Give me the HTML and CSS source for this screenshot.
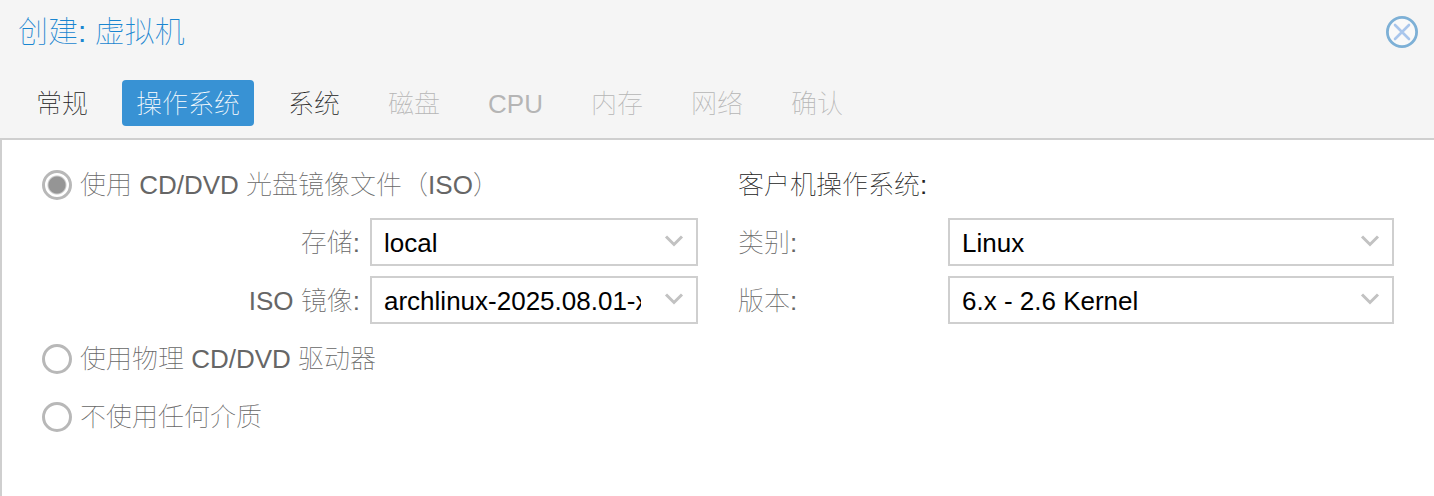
FILE: index.html
```html
<!DOCTYPE html>
<html lang="zh-CN">
  <head>
    <meta charset="UTF-8" />
    <meta name="viewport" content="width=device-width, initial-scale=1.0" />
    <title>创建: 虚拟机</title>
    <link rel="stylesheet" href="styles.css">
  </head>

  <body>
    <header class="window-header">
      <h1>创建: 虚拟机</h1>
      <button type="button" class="close-btn" aria-label="关闭">
        <svg width="32" height="32" viewBox="0 0 32 32" fill="none">
          <circle cx="16" cy="16" r="14.6" fill="#f9f9f9" stroke="#7db0d6" stroke-width="2.8" />
          <path d="M9 9L23 23M23 9L9 23" stroke="#a9c6ec" stroke-width="2.6" stroke-linecap="round" />
        </svg>
      </button>
    </header>

    <nav class="tabs">
      <button type="button" class="tab">常规</button>
      <button type="button" class="tab active">操作系统</button>
      <button type="button" class="tab">系统</button>
      <button type="button" class="tab" disabled>磁盘</button>
      <button type="button" class="tab" disabled>CPU</button>
      <button type="button" class="tab" disabled>内存</button>
      <button type="button" class="tab" disabled>网络</button>
      <button type="button" class="tab" disabled>确认</button>
    </nav>

    <form class="panel">
      <div class="column">
        <div class="row">
          <input type="radio" name="media" id="media-iso" checked />
          <label for="media-iso">使用 CD/DVD 光盘镜像文件（ISO）</label>
        </div>
        <div class="field media-field">
          <label for="storage">存储:</label>
          <div class="combo">
            <select id="storage">
              <option>local</option>
            </select>
            <svg class="arrow" width="20" height="14" viewBox="0 0 20 14"><path d="M2 2.5L10 10.5L18 2.5" /></svg>
          </div>
        </div>
        <div class="field media-field">
          <label for="iso">ISO 镜像:</label>
          <div class="combo">
            <select id="iso">
              <option>archlinux-2025.08.01-x86_64.iso</option>
            </select>
            <svg class="arrow" width="20" height="14" viewBox="0 0 20 14"><path d="M2 2.5L10 10.5L18 2.5" /></svg>
          </div>
        </div>
        <div class="row">
          <input type="radio" name="media" id="media-cdrom" />
          <label for="media-cdrom">使用物理 CD/DVD 驱动器</label>
        </div>
        <div class="row">
          <input type="radio" name="media" id="media-none" />
          <label for="media-none">不使用任何介质</label>
        </div>
      </div>

      <div class="column">
        <div class="row guest-title">客户机操作系统:</div>
        <div class="field guest-field">
          <label for="os-type">类别:</label>
          <div class="combo">
            <select id="os-type">
              <option>Linux</option>
            </select>
            <svg class="arrow" width="20" height="14" viewBox="0 0 20 14"><path d="M2 2.5L10 10.5L18 2.5" /></svg>
          </div>
        </div>
        <div class="field guest-field">
          <label for="os-version">版本:</label>
          <div class="combo">
            <select id="os-version">
              <option>6.x - 2.6 Kernel</option>
            </select>
            <svg class="arrow" width="20" height="14" viewBox="0 0 20 14"><path d="M2 2.5L10 10.5L18 2.5" /></svg>
          </div>
        </div>
      </div>
    </form>
  </body>
</html>
```
FILE: styles.css
```css
* {
  box-sizing: border-box;
}

body {
  margin: 0;
  min-height: 100vh;
  display: flex;
  flex-direction: column;
  background-color: #f5f5f5;
  color: #666;
  font-family: "Liberation Sans", "Noto Sans CJK SC", sans-serif;
  font-size: 26px;
  font-weight: 100;
  line-height: 32px;
}

button,
select {
  font: inherit;
}

.window-header {
  display: flex;
  justify-content: space-between;
  align-items: center;
  height: 64px;
  padding: 0 16px 0 18px;
}

.window-header h1 {
  margin: 0;
  color: #1a86d0;
  font-size: 30px;
  font-weight: 100;
}

.close-btn {
  display: flex;
  padding: 0;
  border: none;
  background: none;
  cursor: pointer;
}

.tabs {
  display: flex;
  gap: 20px;
  padding: 16px 22px 12px;
}

.tab {
  height: 46px;
  padding: 2px 14px 0;
  border: none;
  border-radius: 4px;
  background: none;
  color: #222;
  white-space: nowrap;
  cursor: pointer;
}

.tab.active {
  background-color: #3892d4;
  color: #fff;
}

.tab:disabled {
  color: #b5b5b5;
  cursor: default;
}

.panel {
  flex: 1;
  display: grid;
  grid-template-columns: 1fr 1fr;
  gap: 40px;
  padding: 20px 40px;
  border-top: 2px solid #cfcfcf;
  border-left: 2px solid #cfcfcf;
  background-color: #fff;
}

.column {
  display: flex;
  flex-direction: column;
  gap: 10px;
  min-width: 0;
}

.row {
  display: flex;
  align-items: center;
  gap: 8px;
  height: 48px;
  padding-top: 2px;
  white-space: nowrap;
}

.guest-title {
  color: #222;
}

.field {
  display: grid;
  align-items: center;
  gap: 10px;
  white-space: nowrap;
}

.field label {
  padding-top: 2px;
}

.media-field {
  grid-template-columns: 1fr 328px;
}

.media-field label {
  text-align: right;
}

.guest-field {
  grid-template-columns: 200px 1fr;
}

input[type="radio"] {
  appearance: none;
  width: 30px;
  height: 30px;
  margin: 0;
  border: 3px solid #b8b8b8;
  border-radius: 50%;
  background-color: #fff;
}

input[type="radio"]:checked {
  background: radial-gradient(circle, #959595 8px, #fff 10px);
}

.combo {
  position: relative;
  min-width: 0;
}

.combo select {
  appearance: none;
  display: block;
  width: 100%;
  height: 48px;
  padding: 2px 55px 0 12px;
  border: 2px solid #cfcfcf;
  border-radius: 0;
  background-color: #fff;
  color: #000;
}

.arrow {
  position: absolute;
  top: 16px;
  right: 14px;
  fill: none;
  stroke: #c2c2c2;
  stroke-width: 3;
  pointer-events: none;
}
```
